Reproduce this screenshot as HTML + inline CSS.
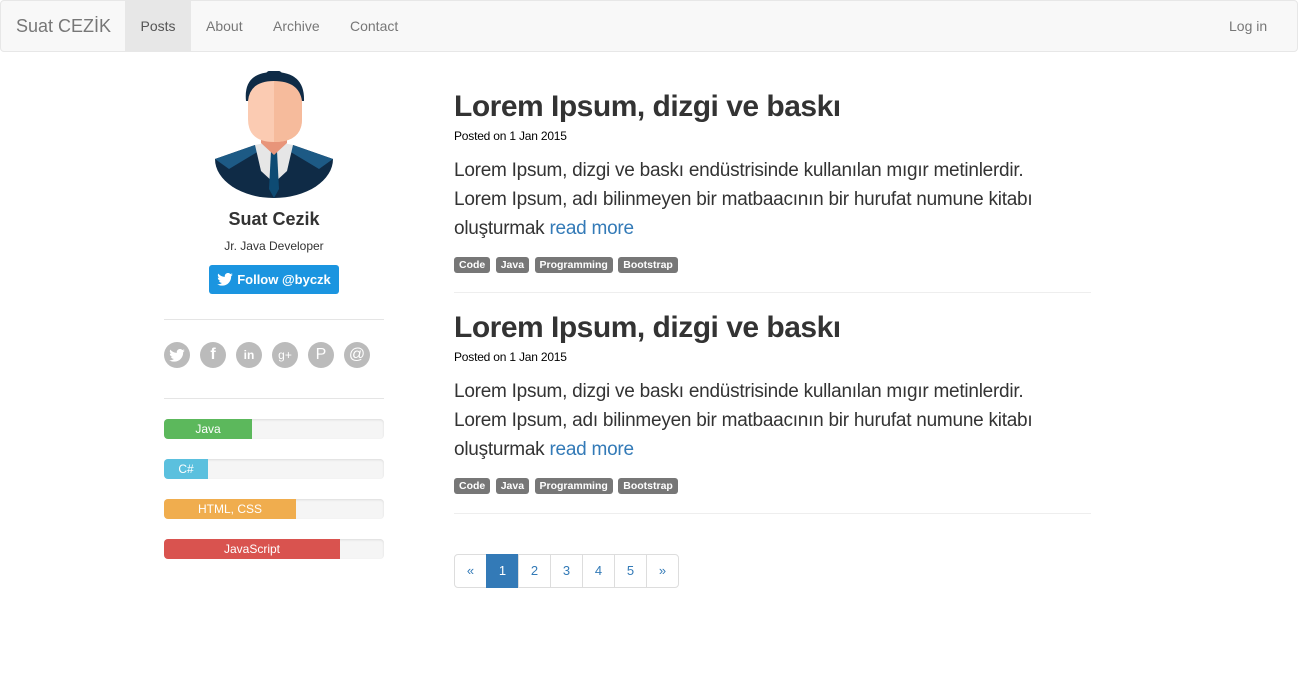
<!DOCTYPE html>
<html><head><meta charset="utf-8"><style>
*{box-sizing:border-box}
body{margin:0;font-family:"Liberation Sans",sans-serif;color:#333;background:#fff;width:1298px;height:699px;overflow:hidden}
.nav{position:absolute;left:0;top:0;width:1298px;height:52px;background:#f8f8f8;border:1px solid #e7e7e7;border-radius:4px}
.nav a{position:absolute;top:0;height:50px;line-height:50px;font-size:14px;color:#777;text-decoration:none}
.brand{left:15px;font-size:18px!important;color:#777}
.side{position:absolute;left:164px;width:220px;top:52px;text-align:center}
.name{font-size:18px;font-weight:bold;position:absolute;top:157px;width:100%}
.role{font-size:12px;position:absolute;top:187px;width:100%}
.follow{position:absolute;left:45px;top:213px;width:130px;height:29px;background:#1b95e0;border-radius:3px;color:#fff;font-weight:bold;font-size:13px;line-height:29px}
.hr{position:absolute;left:0;width:220px;border-top:1px solid #e5e5e5}
.soc{position:absolute;top:290px;left:0}
.soc span{position:absolute;width:26px;height:26px;border-radius:50%;background:#bbb;color:#fff;font-size:14px;font-weight:bold;line-height:26px;text-align:center}
.bar{position:absolute;left:0;width:220px;height:20px;background:#f5f5f5;border-radius:4px;overflow:hidden;box-shadow:inset 0 1px 2px rgba(0,0,0,.1)}
.bar div{height:20px;color:#fff;font-size:12px;line-height:20px;text-align:center}
.main{position:absolute;left:454px;top:0;width:637px}
h1{position:absolute;margin:0;font-size:30px;font-weight:bold;left:0;white-space:nowrap;letter-spacing:-0.5px}
.date{position:absolute;font-size:12px;color:#000;left:0;letter-spacing:-0.2px}
.p{position:absolute;font-size:19px;letter-spacing:-0.25px;line-height:29px;left:0;width:640px;color:#333}
.p a{color:#337ab7;text-decoration:none}
.tags{position:absolute;left:0}
.tags span{display:inline-block;background:#777;color:#fff;font-size:10.5px;font-weight:bold;padding:0 5px;height:16px;line-height:16px;border-radius:3px;margin-right:1px}
.mhr{position:absolute;left:0;width:637px;border-top:1px solid #eee}
.pag{position:absolute;left:0;top:554px;display:flex}
.pag span{width:33px;height:34px;border:1px solid #ddd;margin-left:-1px;text-align:center;line-height:32px;color:#337ab7;font-size:13px}
.pag span:first-child{border-radius:4px 0 0 4px;margin-left:0}
.pag span:last-child{border-radius:0 4px 4px 0}
.pag .act{background:#337ab7;color:#fff;border-color:#337ab7}
</style></head><body>
<div class="nav">
<a class="brand">Suat CEZİK</a>
<a style="left:124px;width:66px;background:#e7e7e7;color:#555;text-align:center">Posts</a>
<a style="left:205px">About</a>
<a style="left:272px">Archive</a>
<a style="left:349px">Contact</a>
<a style="left:1228px">Log in</a>
</div>
<div class="side">
<svg style="position:absolute;left:51px;top:19px" width="118" height="127" viewBox="0 0 118 127">
<defs><clipPath id="c"><path d="M0 88 A59 39 0 0 0 118 88 L118 70 L0 70Z"/></clipPath></defs>
<g clip-path="url(#c)">
<path d="M0 88 L40 74 L78 74 L118 88 L118 127 L0 127Z" fill="#0f2b46"/>
<path d="M0 88 L40 74 L44 80 L14 98Z" fill="#1d5a85"/>
<path d="M118 88 L78 74 L74 80 L104 98Z" fill="#1d5a85"/>
<path d="M40 74 L59 70 L78 74 L72 100 L59 112 L46 100Z" fill="#e6e6e6"/>
<path d="M56 80 L62 80 L64 118 L59 127 L54 118Z" fill="#0e4b73"/>
</g>
<path d="M46 56 L72 56 L72 72 L59 84 L46 72Z" fill="#e8957a"/>
<path d="M33 22 Q33 6 59 6 Q87 6 87 22 L87 48 Q87 71 59 71 Q33 71 33 48Z" fill="#fbcbb2"/>
<path d="M59 6 Q87 6 87 22 L87 48 Q87 71 59 71Z" fill="#f6bb9c"/>
<path d="M31 30 Q28 1 59 1 Q90 1 89 30 L87 30 Q84 10 59 10 Q35 10 33 30Z" fill="#0f2b46"/>
<ellipse cx="59" cy="3" rx="8" ry="4" fill="#0f2b46"/>
</svg>
<div class="name">Suat Cezik</div>
<div class="role">Jr. Java Developer</div>
<div class="follow"><svg width="16" height="13" viewBox="0 0 24 20" style="vertical-align:-2px;margin-right:4px"><path fill="#fff" d="M24 2.4a10 10 0 0 1-2.8.8A5 5 0 0 0 23.3.4a10 10 0 0 1-3.1 1.2A4.9 4.9 0 0 0 11.8 6 14 14 0 0 1 1.7.9a4.9 4.9 0 0 0 1.5 6.6A4.9 4.9 0 0 1 1 6.9a4.9 4.9 0 0 0 3.9 4.9 4.9 4.9 0 0 1-2.2.1 4.9 4.9 0 0 0 4.6 3.4A9.9 9.9 0 0 1 0 17.3 14 14 0 0 0 7.5 19.5c9 0 14-7.5 14-14v-.6A10 10 0 0 0 24 2.4z"/></svg>Follow @byczk</div>
<div class="hr" style="top:267px"></div>
<div class="soc">
<span style="left:0"><svg width="16" height="13" viewBox="0 0 24 20" style="vertical-align:-2px"><path fill="#fff" d="M24 2.4a10 10 0 0 1-2.8.8A5 5 0 0 0 23.3.4a10 10 0 0 1-3.1 1.2A4.9 4.9 0 0 0 11.8 6 14 14 0 0 1 1.7.9a4.9 4.9 0 0 0 1.5 6.6A4.9 4.9 0 0 1 1 6.9a4.9 4.9 0 0 0 3.9 4.9 4.9 4.9 0 0 1-2.2.1 4.9 4.9 0 0 0 4.6 3.4A9.9 9.9 0 0 1 0 17.3 14 14 0 0 0 7.5 19.5c9 0 14-7.5 14-14v-.6A10 10 0 0 0 24 2.4z"/></svg></span><span style="left:36px;font-size:16px">f</span><span style="left:72px;font-size:12px">in</span><span style="left:108px;font-size:12px;font-weight:normal">g+</span><span style="left:144px;font-weight:normal;font-size:16px">P</span><span style="left:180px;font-weight:normal;font-size:16px">@</span>
</div>
<div class="hr" style="top:346px"></div>
<div class="bar" style="top:367px"><div style="width:88px;background:#5cb85c">Java</div></div>
<div class="bar" style="top:407px"><div style="width:44px;background:#5bc0de">C#</div></div>
<div class="bar" style="top:447px"><div style="width:132px;background:#f0ad4e">HTML, CSS</div></div>
<div class="bar" style="top:487px"><div style="width:176px;background:#d9534f">JavaScript</div></div>
</div>
<div class="main">
<h1 style="top:90px">Lorem Ipsum, dizgi ve baskı</h1>
<div class="date" style="top:129px">Posted on 1 Jan 2015</div>
<div class="p" style="top:156px">Lorem Ipsum, dizgi ve baskı endüstrisinde kullanılan mıgır metinlerdir.<br>Lorem Ipsum, adı bilinmeyen bir matbaacının bir hurufat numune kitabı<br>oluşturmak <a>read more</a></div>
<div class="tags" style="top:255px"><span>Code</span> <span>Java</span> <span>Programming</span> <span>Bootstrap</span></div>
<div class="mhr" style="top:292px"></div>
<h1 style="top:311px">Lorem Ipsum, dizgi ve baskı</h1>
<div class="date" style="top:350px">Posted on 1 Jan 2015</div>
<div class="p" style="top:377px">Lorem Ipsum, dizgi ve baskı endüstrisinde kullanılan mıgır metinlerdir.<br>Lorem Ipsum, adı bilinmeyen bir matbaacının bir hurufat numune kitabı<br>oluşturmak <a>read more</a></div>
<div class="tags" style="top:476px"><span>Code</span> <span>Java</span> <span>Programming</span> <span>Bootstrap</span></div>
<div class="mhr" style="top:513px"></div>
<div class="pag"><span>«</span><span class="act">1</span><span>2</span><span>3</span><span>4</span><span>5</span><span>»</span></div>
</div>
</body></html>
